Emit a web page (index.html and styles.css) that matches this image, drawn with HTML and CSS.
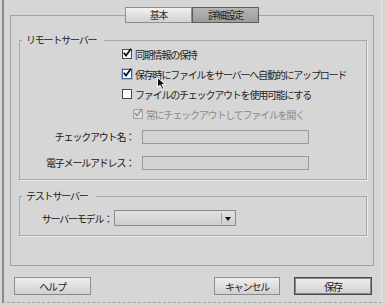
FILE: index.html
```html
<!DOCTYPE html>
<html lang="ja">
<head>
  <meta charset="UTF-8">
  <title>詳細設定</title>
  <link rel="stylesheet" href="styles.css">
</head>
<body>
  <div class="window">
    <div class="tabs">
      <span class="tab">基本</span>
      <span class="tab active">詳細設定</span>
    </div>

    <div class="panel">
      <div class="group remote">
        <div class="legend">リモートサーバー</div>
        <div class="checks">
          <div class="check">
            <span class="box"><svg viewBox="0 0 10 10"><path d="M1.8 4.8 L4 7.6 L9 0.8"></path></svg></span>
            同期情報の保持
          </div>
          <div class="check">
            <span class="box focus"><svg viewBox="0 0 10 10"><path d="M1.8 4.8 L4 7.6 L9 0.8"></path></svg></span>
            保存時にファイルをサーバーへ自動的にアップロード
          </div>
          <div class="check">
            <span class="box"></span>
            ファイルのチェックアウトを使用可能にする
          </div>
          <div class="check sub disabled">
            <span class="box"><svg viewBox="0 0 10 10"><path d="M1.8 4.8 L4 7.6 L9 0.8"></path></svg></span>
            常にチェックアウトしてファイルを開く
          </div>
        </div>
        <div class="field first">
          <span class="field-label">チェックアウト名：</span>
          <span class="input"></span>
        </div>
        <div class="field second">
          <span class="field-label">電子メールアドレス：</span>
          <span class="input"></span>
        </div>
      </div>

      <div class="group test">
        <div class="legend">テストサーバー</div>
        <div class="field model">
          <span class="field-label">サーバーモデル：</span>
          <span class="select"><span class="arrow"></span></span>
        </div>
      </div>
    </div>

    <div class="buttons">
      <button class="button">ヘルプ</button>
      <div class="actions">
        <button class="button cancel">キャンセル</button>
        <button class="button save">保存</button>
      </div>
    </div>

    <!-- mouse pointer sitting over the second option -->
    <svg class="cursor" width="10" height="13" viewBox="0 0 10 13">
      <path d="M0.5 0.5 L0.5 10.5 L3 8 L5 12.3 L6.8 11.5 L4.9 7.4 L8.3 7.4 Z"></path>
    </svg>
  </div>
</body>
</html>
```

FILE: styles.css
```css
body {
  margin: 0;
  background-color: #d6d6d6;
  font-family: "Noto Sans CJK JP", "Noto Sans", sans-serif;
  font-size: 10px;
  letter-spacing: -1.2px;
  color: #1c1c1c;
}
.window {
  position: relative;
  box-sizing: border-box;
  margin-left: 2px;
  width: 380px;
  height: 303px;
  border-left: 2px solid #8b8b8b;
  border-right: 1px solid #e4e4e4;
  border-bottom: 1px dashed #a2a2a2;
  padding-top: 7px;
}
.tabs {
  position: relative;
  z-index: 1;
  display: flex;
  justify-content: center;
  margin-left: 6px;
  width: 364px;
  height: 16px;
}
.tab {
  box-sizing: border-box;
  width: 67px;
  height: 16px;
  line-height: 14px;
  text-align: center;
  border: 1px solid #8e8e8e;
  background: linear-gradient(#f1f1f1, #d2d2d2);
  color: #333;
}
.tab.active {
  border-color: #5c5c5c;
  background: linear-gradient(#b6b6b6, #9d9d9d);
  color: #1a1a1a;
}
.panel {
  box-sizing: border-box;
  margin-top: -8px;
  margin-left: 6px;
  width: 364px;
  height: 251px;
  border: 1px solid #a3a3a3;
  padding: 18px 6px 0 8px;
}
.group {
  border: 1px solid #a8a8a8;
  box-shadow: 1px 1px 0 #ececec;
}
.remote {
  margin-top: 6px;
  padding-bottom: 9px;
}
.test {
  margin-top: 16px;
  padding-bottom: 9px;
}
.legend {
  display: table;
  margin: -7px 0 -2px 2px;
  padding: 0 8px 0 4px;
  line-height: 12px;
  background-color: #d6d6d6;
  color: #222;
}
.checks {
  padding-left: 102px;
}
.check {
  display: flex;
  align-items: center;
  height: 20px;
  color: #1e1e1e;
}
.check.sub {
  padding-left: 11px;
}
.check.disabled {
  color: #8a8a8a;
}
.box {
  box-sizing: border-box;
  width: 10px;
  height: 10px;
  margin-right: 3px;
  border: 1px solid #4a4a4a;
  background-color: #fbfbfb;
  overflow: visible;
}
.box.focus {
  border-color: #3d64a8;
  box-shadow: 0 0 0 1px #9fb6dc;
}
.disabled .box {
  border-color: #a2a2a2;
  background-color: #dcdcdc;
}
.box svg {
  display: block;
  width: 10px;
  height: 10px;
  margin: -2px 0 0 -1px;
  overflow: visible;
}
.box path {
  fill: none;
  stroke: #111;
  stroke-width: 1.7;
}
.disabled .box path {
  stroke: #8c8c8c;
  stroke-width: 1.3;
}
.field {
  display: flex;
  align-items: center;
}
.field.first {
  margin-top: 5px;
}
.field.second {
  margin-top: 11px;
}
.field-label {
  width: 114px;
  margin-right: 8px;
  text-align: right;
  color: #161616;
}
.input {
  box-sizing: border-box;
  width: 167px;
  height: 14px;
  border: 1px solid #9a9a9a;
  background-color: #d3d3d3;
}
.field.model {
  margin-top: 10px;
}
.model .field-label {
  width: 92px;
  margin-right: 2px;
}
.select {
  position: relative;
  box-sizing: border-box;
  width: 122px;
  height: 16px;
  border: 1px solid #8c8c8c;
  background: linear-gradient(#e2e2e2, #cdcdcd);
}
.select::after {
  content: "";
  position: absolute;
  top: 2px;
  bottom: 2px;
  right: 13px;
  border-left: 1px solid #a0a0a0;
}
.arrow {
  position: absolute;
  top: 6px;
  right: 4px;
  width: 0;
  height: 0;
  border-left: 3px solid transparent;
  border-right: 3px solid transparent;
  border-top: 4px solid #111;
}
.buttons {
  display: flex;
  justify-content: space-between;
  margin: 11px 0 0 10px;
  width: 358px;
}
.actions {
  display: flex;
  gap: 14px;
}
.button {
  box-sizing: border-box;
  width: 77px;
  height: 18px;
  padding: 0;
  border: 1px solid #8d8d8d;
  background: linear-gradient(#eeeeee, #d0d0d0);
  font-family: inherit;
  font-size: 10px;
  letter-spacing: -1.2px;
  color: #222;
}
.button.cancel {
  width: 66px;
}
.button.save {
  width: 78px;
  border: 1px solid #4a4a4a;
  box-shadow: inset 0 0 0 1px #8a8a8a;
}
.cursor {
  position: absolute;
  left: 153px;
  top: 77px;
}
.cursor path {
  fill: #111;
  stroke: #fff;
  stroke-width: 1;
}
```
